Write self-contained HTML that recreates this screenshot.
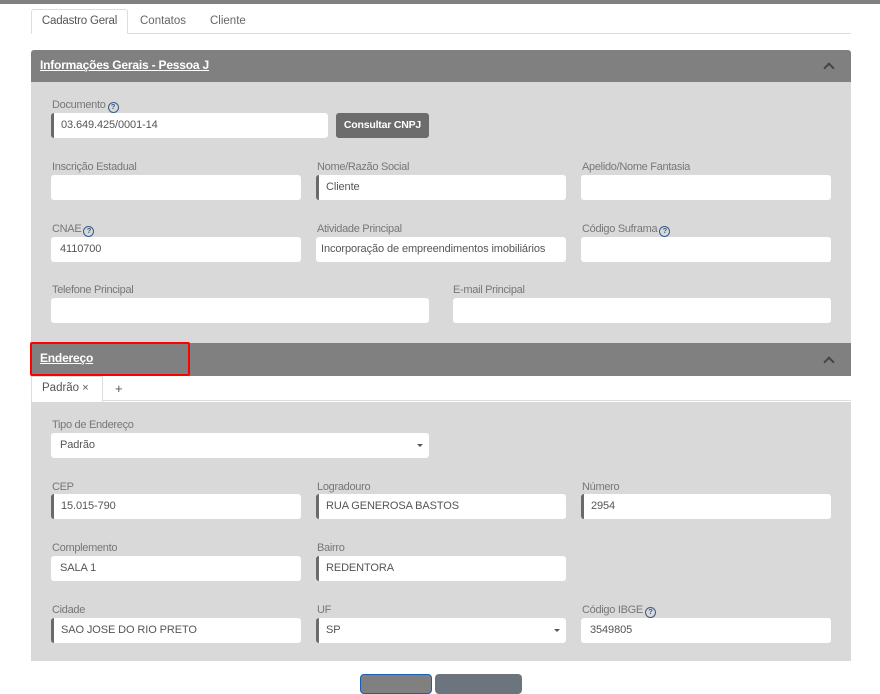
<!DOCTYPE html>
<html><head><meta charset="utf-8">
<style>
*{box-sizing:border-box;margin:0;padding:0}
body{width:880px;height:685px;overflow:hidden;background:#fff;font-family:"Liberation Sans",sans-serif;position:relative;color:#555}
.a{position:absolute}
.lbl{position:absolute;font-size:11px;color:#777;letter-spacing:-0.3px;margin-top:1px}
.inp{position:absolute;height:25px;background:#fff;border-radius:3px;font-size:11px;color:#555;padding:0 9px;line-height:25px;white-space:nowrap;overflow:hidden;letter-spacing:-0.1px}
.req{border-left:3px solid #6a6a6a;padding-left:7px}
.hdr{position:absolute;left:31px;width:820px;background:#808080}
.hdr span{position:absolute;left:9px;color:#fff;font-weight:bold;text-decoration:underline;font-size:12px;letter-spacing:-0.2px}
.chev{position:absolute;right:18px;width:8px;height:8px;border-left:2px solid #444;border-top:2px solid #444;transform:rotate(45deg)}
.q{display:inline-block;width:11px;height:11px;border:1.3px solid #3a5a8a;border-radius:50%;font-size:7.5px;line-height:8px;text-align:center;color:#3a5a8a;vertical-align:-1px;margin-left:2px;font-weight:bold}
.caret{position:absolute;right:6px;top:11px;border-left:3px solid transparent;border-right:3px solid transparent;border-top:3px solid #555}
</style></head><body>
<div class="a" style="left:0;top:0;width:880px;height:4px;background:#808080"></div>
<div class="a" style="left:31px;top:33px;width:820px;height:1px;background:#ddd"></div>
<div class="a" style="left:31px;top:9px;width:97px;height:25px;border:1px solid #ddd;border-bottom:1px solid #fff;background:#fff;border-radius:3px 3px 0 0;font-size:11.5px;color:#555;text-align:center;line-height:23px;letter-spacing:-0.2px">Cadastro Geral</div>
<div class="a" style="left:140px;top:15px;font-size:11.5px;color:#666">Contatos</div>
<div class="a" style="left:210px;top:15px;font-size:11.5px;color:#666">Cliente</div>

<div class="hdr" style="top:50px;height:32px;border-radius:3px 3px 0 0"><span style="top:8px">Informações Gerais - Pessoa J</span><div class="chev" style="top:14px"></div></div>
<div class="a" style="left:31px;top:82px;width:820px;height:261px;background:#d9d9d9"></div>

<div class="lbl" style="left:52px;top:98px">Documento<span class="q">?</span></div>
<div class="inp req" style="left:51px;top:113px;width:277px">03.649.425/0001-14</div>
<div class="a" style="left:336px;top:113px;width:93px;height:25px;background:#6c6c6c;border-radius:3px;color:#fff;font-weight:bold;font-size:10.5px;text-align:center;line-height:25px;letter-spacing:-0.2px">Consultar CNPJ</div>

<div class="lbl" style="left:52px;top:160px">Inscrição Estadual</div>
<div class="inp" style="left:51px;top:175px;width:250px"></div>
<div class="lbl" style="left:317px;top:160px">Nome/Razão Social</div>
<div class="inp req" style="left:316px;top:175px;width:250px">Cliente</div>
<div class="lbl" style="left:582px;top:160px">Apelido/Nome Fantasia</div>
<div class="inp" style="left:581px;top:175px;width:250px"></div>

<div class="lbl" style="left:52px;top:222px">CNAE<span class="q">?</span></div>
<div class="inp" style="left:51px;top:237px;width:250px">4110700</div>
<div class="lbl" style="left:317px;top:222px">Atividade Principal</div>
<div class="inp" style="left:316px;top:237px;width:250px;padding-left:5px;font-size:11px">Incorporação de empreendimentos imobiliários</div>
<div class="lbl" style="left:582px;top:222px">Código Suframa<span class="q">?</span></div>
<div class="inp" style="left:581px;top:237px;width:250px"></div>

<div class="lbl" style="left:52px;top:283px">Telefone Principal</div>
<div class="inp" style="left:51px;top:298px;width:378px"></div>
<div class="lbl" style="left:453px;top:283px">E-mail Principal</div>
<div class="inp" style="left:453px;top:298px;width:378px"></div>

<div class="hdr" style="top:343px;height:33px"><span style="top:8px">Endereço</span><div class="chev" style="top:15px"></div></div>
<div class="a" style="left:30px;top:342px;width:160px;height:34px;border:2px solid #f00;border-radius:2px"></div>
<div class="a" style="left:31px;top:376px;width:820px;height:25px;background:#fff;border-bottom:1px solid #ddd"></div>
<div class="a" style="left:31px;top:376px;width:72px;height:26px;border:1px solid #ddd;border-bottom:none;background:#fff;font-size:11.5px;color:#555;padding-left:10px;line-height:23px">Padrão <span style="font-size:11px">×</span></div>
<div class="a" style="left:115px;top:381px;font-size:13px;color:#555">+</div>
<div class="a" style="left:31px;top:402px;width:820px;height:259px;background:#d9d9d9"></div>

<div class="lbl" style="left:52px;top:418px">Tipo de Endereço</div>
<div class="inp" style="left:51px;top:433px;width:378px">Padrão<div class="caret"></div></div>

<div class="lbl" style="left:52px;top:480px">CEP</div>
<div class="inp req" style="left:51px;top:494px;width:250px">15.015-790</div>
<div class="lbl" style="left:317px;top:480px">Logradouro</div>
<div class="inp req" style="left:316px;top:494px;width:250px">RUA GENEROSA BASTOS</div>
<div class="lbl" style="left:582px;top:480px">Número</div>
<div class="inp req" style="left:581px;top:494px;width:250px">2954</div>

<div class="lbl" style="left:52px;top:541px">Complemento</div>
<div class="inp" style="left:51px;top:556px;width:250px">SALA 1</div>
<div class="lbl" style="left:317px;top:541px">Bairro</div>
<div class="inp req" style="left:316px;top:556px;width:250px">REDENTORA</div>

<div class="lbl" style="left:52px;top:603px">Cidade</div>
<div class="inp req" style="left:51px;top:618px;width:250px">SAO JOSE DO RIO PRETO</div>
<div class="lbl" style="left:317px;top:603px">UF</div>
<div class="inp req" style="left:316px;top:618px;width:250px">SP<div class="caret"></div></div>
<div class="lbl" style="left:582px;top:603px">Código IBGE<span class="q">?</span></div>
<div class="inp" style="left:581px;top:618px;width:250px">3549805</div>

<div class="a" style="left:360px;top:674px;width:72px;height:20px;background:#808080;border:1px solid #1a5fb4;border-radius:4px"></div>
<div class="a" style="left:435px;top:674px;width:87px;height:20px;background:#6c757d;border-radius:4px"></div>
</body></html>
